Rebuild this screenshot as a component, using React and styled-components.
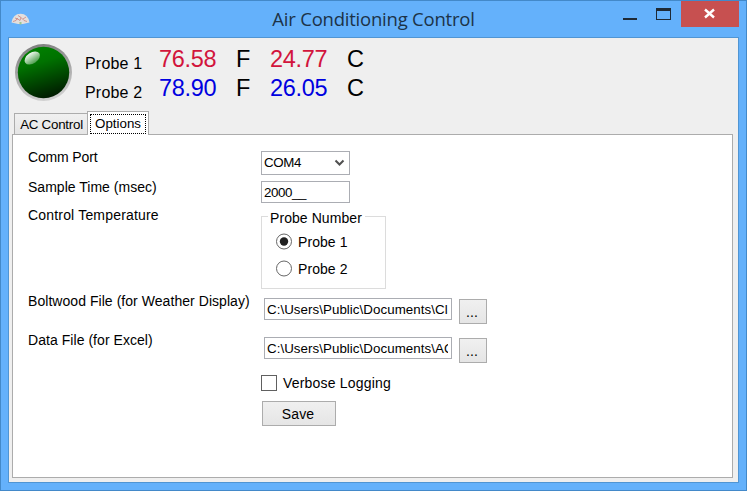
import React, { useState } from "react";
import styled, { createGlobalStyle, css } from "styled-components";

const Global = createGlobalStyle`
  * { box-sizing: border-box; }
  body { margin: 0; background: #64b1fb; overflow: hidden; }
`;

const Window = styled.div`
  width: 747px;
  height: 491px;
  display: flex;
  flex-direction: column;
  padding: 0 7px 7px;
  background: #64b1fb;
  border: 1px solid #4389c9;
  font-family: "Liberation Sans", Arial, sans-serif;
  font-size: 14px;
  line-height: 16px;
  letter-spacing: 0.07px;
  color: #000;
  white-space: nowrap;
`;

const TitleBar = styled.header`
  height: 36px;
  flex: none;
  display: grid;
  grid-template-columns: 140px 1fr 140px;
  align-items: start;
`;

const AppIcon = styled.svg`
  display: block;
  margin: 12px 0 0 3px;
`;

const Title = styled.h1`
  margin: 0;
  text-align: center;
  font: 400 18.5px/36px "Open Sans", "Segoe UI", sans-serif;
  letter-spacing: -0.22px;
  color: #1c3348;
`;

const WindowButtons = styled.div`
  display: flex;
  justify-content: flex-end;
`;

const WindowButton = styled.button`
  width: ${(p) => p.$width}px;
  height: 26px;
  padding: 0;
  border: 0;
  display: block;
  background: ${(p) => (p.$danger ? "#c75050" : "transparent")};
  svg { display: block; }
`;

const Client = styled.main`
  flex: 1;
  display: flex;
  flex-direction: column;
  padding: 0 5px 4px 3px;
  background: #efefef;
  border: 1px solid #5095d3;
`;

const Status = styled.section`
  display: flex;
  height: 73px;
  flex: none;
  padding: 5px 0 0 3px;
`;

const Led = styled.svg`
  display: block;
  flex: none;
`;

const Readings = styled.div`
  margin: 2px 0 0 12px;
`;

const Reading = styled.div`
  display: grid;
  grid-template-columns: 74px 77px 34px 77px 30px;
  height: 29px;
  align-items: start;
`;

const ProbeName = styled.span`
  font-size: 16px;
  line-height: 37px;
  letter-spacing: 0.2px;
`;

const Value = styled.span`
  font-size: 23.5px;
  line-height: 29px;
  letter-spacing: -0.3px;
  color: ${(p) => p.$color || "#000"};
`;

const Tabs = styled.nav`
  display: flex;
  align-items: flex-end;
  height: 24px;
  flex: none;
  margin: 0 0 -1px 2px;
  z-index: 1;
`;

const Tab = styled.button`
  font: inherit;
  font-size: 13.33px;
  letter-spacing: 0;
  color: #000;
  padding: 0;
  border: 1px solid #acacac;
  ${(p) =>
    p.$active
      ? css`
          width: 62px;
          height: 24px;
          padding: 2px 2px 1px;
          border-bottom: 0;
          background: #fff;
        `
      : css`
          width: 73px;
          height: 22px;
          padding: 2px 0 0 1px;
          letter-spacing: -0.25px;
          border-right: 0;
          background: linear-gradient(#f0f0f0, #e5e5e5);
        `}
`;

const FocusFrame = styled.span`
  display: block;
  height: 20px;
  line-height: 17px;
  border: 1px dotted #000;
`;

const Panel = styled.section`
  flex: 1;
  padding: 14px 0 0 15px;
  background: #fff;
  border: 1px solid #acacac;
`;

const Row = styled.div`
  display: grid;
  grid-template-columns: 233px 1fr;
  align-items: start;
  height: ${(p) => p.$height}px;
`;

const Label = styled.span`
  letter-spacing: ${(p) => p.$tracking ?? 0.05}px;
`;

const Controls = styled.div`
  grid-column: 2;
  display: flex;
  align-items: flex-start;
  gap: 7px;
  padding: ${(p) => p.$top || 0}px 0 0 ${(p) => p.$indent || 0}px;
`;

const field = css`
  font: inherit;
  font-size: 13.33px;
  letter-spacing: ${(p) => p.$tracking ?? -0.4}px;
  color: #000;
  background: #fff;
  border: 1px solid #abadb3;
  border-radius: 0;
  outline: 0;
  padding: 0 3px 0 2px;
`;

const Input = styled.input`
  ${field}
  width: ${(p) => p.$width}px;
  height: 22px;
`;

const Combo = styled.button`
  ${field}
  width: 89px;
  height: 24px;
  display: flex;
  align-items: center;
  justify-content: space-between;
  padding-right: 4px;
`;

const Group = styled.div`
  width: 125px;
  height: 73px;
  margin-top: 9px;
  border: 1px solid #dcdcdc;
`;

const Legend = styled.div`
  width: 97px;
  margin: -7px 0 2px 6px;
  padding-left: 2px;
  background: #fff;
`;

const Radio = styled.label`
  display: flex;
  align-items: center;
  height: 27px;
  padding-left: 14px;
  gap: 6px;
`;

const CheckLabel = styled.label`
  display: flex;
  gap: 6px;
  letter-spacing: 0.2px;
`;

const CheckBox = styled.input`
  appearance: none;
  width: 16px;
  height: 16px;
  margin: 0;
  background: #fff;
  border: 1px solid #606060;
`;

const Button = styled.button`
  font: inherit;
  letter-spacing: 0.1px;
  color: #000;
  width: ${(p) => p.$width}px;
  height: 25px;
  margin-top: ${(p) => p.$top || 0}px;
  padding: 1px 2px 0 0;
  border: 1px solid #acacac;
  background: linear-gradient(#f0f0f0, #e5e5e5);
`;

const READINGS = [
  { name: "Probe 1", f: "76.58", c: "24.77", color: "#d2143c" },
  { name: "Probe 2", f: "78.90", c: "26.05", color: "#0000e0" },
];

const FILES = [
  { label: "Boltwood File (for Weather Display)", path: "C:\\Users\\Public\\Documents\\Clarity.txt" },
  { label: "Data File (for Excel)", path: "C:\\Users\\Public\\Documents\\ACData.csv" },
];

export default function App() {
  const [probe, setProbe] = useState("Probe 1");
  return (
    <>
      <Global />
      <Window>
        <TitleBar>
          <AppIcon width="20" height="13" viewBox="0 0 20 13">
            <path d="M0.500 9.500Q2 1 9.500 .8Q17 1 18.500 9.500L12 11H7Z" fill="#e3dfdd" />
            <path d="M2 8.500l3-1 1-2 3 2 1-3 3 3 3 1M4 5l3 1m8-2-3 2M7 2.500l3 2" fill="none" stroke="#cb7f7a" strokeWidth="1" opacity="0.75" />
            <path d="M8.500 9h2v2.500h-2z" fill="#9cc78f" />
          </AppIcon>
          <Title>Air Conditioning Control</Title>
          <WindowButtons>
            <WindowButton $width={41} aria-label="Minimize">
              <svg width="41" height="26"><path d="M8 17h14v2H8z" fill="#1e2a36" /></svg>
            </WindowButton>
            <WindowButton $width={25} aria-label="Maximize">
              <svg width="25" height="26">
                <path fillRule="evenodd" d="M0 7h15v12H0zM1 10v8h13v-8z" fill="#1e2a36" />
              </svg>
            </WindowButton>
            <WindowButton $width={58} $danger aria-label="Close">
              <svg width="58" height="26">
                <path d="M24 8.500l9 8M33 8.500l-9 8" stroke="#fff" strokeWidth="2.400" />
              </svg>
            </WindowButton>
          </WindowButtons>
        </TitleBar>
        <Client>
          <Status>
            <Led width="58" height="58" viewBox="0 0 58 58">
              <defs>
                <linearGradient id="rim" x1="0.4" y1="0" x2="0.6" y2="1">
                  <stop offset="0" stopColor="#808080" />
                  <stop offset="1" stopColor="#d3d3d3" />
                </linearGradient>
                <linearGradient id="lamp" x1="0.35" y1="0" x2="0.65" y2="1">
                  <stop offset="0" stopColor="#008000" />
                  <stop offset="0.3" stopColor="#007200" />
                  <stop offset="1" stopColor="#001800" />
                </linearGradient>
                <linearGradient id="shine" x1="0" y1="0" x2="0" y2="1">
                  <stop offset="0" stopColor="#fff" stopOpacity="0.95" />
                  <stop offset="1" stopColor="#fff" stopOpacity="0.3" />
                </linearGradient>
              </defs>
              <circle cx="28.500" cy="29.500" r="28.500" fill="url(#rim)" />
              <circle cx="28.500" cy="29.500" r="25.700" fill="url(#lamp)" />
              <ellipse cx="17.300" cy="15" rx="8.500" ry="5.500" transform="rotate(-34 17.300 15)" fill="url(#shine)" />
            </Led>
            <Readings>
              {READINGS.map((r) => (
                <Reading key={r.name}>
                  <ProbeName>{r.name}</ProbeName>
                  <Value $color={r.color}>{r.f}</Value>
                  <Value>F</Value>
                  <Value $color={r.color}>{r.c}</Value>
                  <Value>C</Value>
                </Reading>
              ))}
            </Readings>
          </Status>
          <Tabs>
            <Tab>AC Control</Tab>
            <Tab $active><FocusFrame>Options</FocusFrame></Tab>
          </Tabs>
          <Panel>
            <Row $height={30}>
              <Label $tracking={-0.15}>Comm Port</Label>
              <Controls $top={2}>
                <Combo>
                  COM4
                  <svg width="11" height="8" viewBox="0 0 11 8">
                    <path d="M1.500 1.500l4 4 4-4" fill="none" stroke="#505050" strokeWidth="2" />
                  </svg>
                </Combo>
              </Controls>
            </Row>
            <Row $height={28}>
              <Label $tracking={0.02}>Sample Time (msec)</Label>
              <Controls $top={2}><Input $width={89} defaultValue="2000__" /></Controls>
            </Row>
            <Row $height={86}>
              <Label $tracking={0.18}>Control Temperature</Label>
              <Group>
                <Legend>Probe Number</Legend>
                {READINGS.map(({ name }) => (
                  <Radio key={name} onClick={() => setProbe(name)}>
                    <svg width="16" height="17" viewBox="0 0 16 17">
                      <circle cx="8" cy="8.500" r="7.500" fill="#fff" stroke="#666" />
                      {probe === name && <circle cx="8" cy="8.500" r="4.200" fill="#212121" />}
                    </svg>
                    <span>{name}</span>
                  </Radio>
                ))}
              </Group>
            </Row>
            {FILES.map((file) => (
              <Row key={file.label} $height={39}>
                <Label>{file.label}</Label>
                <Controls $top={5} $indent={3}>
                  <Input $width={188} $tracking={0.05} defaultValue={file.path} />
                  <Button $width={28} $top={1}>...</Button>
                </Controls>
              </Row>
            ))}
            <Row $height={30}>
              <Controls $top={4}>
                <CheckLabel><CheckBox type="checkbox" />Verbose Logging</CheckLabel>
              </Controls>
            </Row>
            <Row $height={25}>
              <Controls $indent={1}><Button $width={74}>Save</Button></Controls>
            </Row>
          </Panel>
        </Client>
      </Window>
    </>
  );
}
